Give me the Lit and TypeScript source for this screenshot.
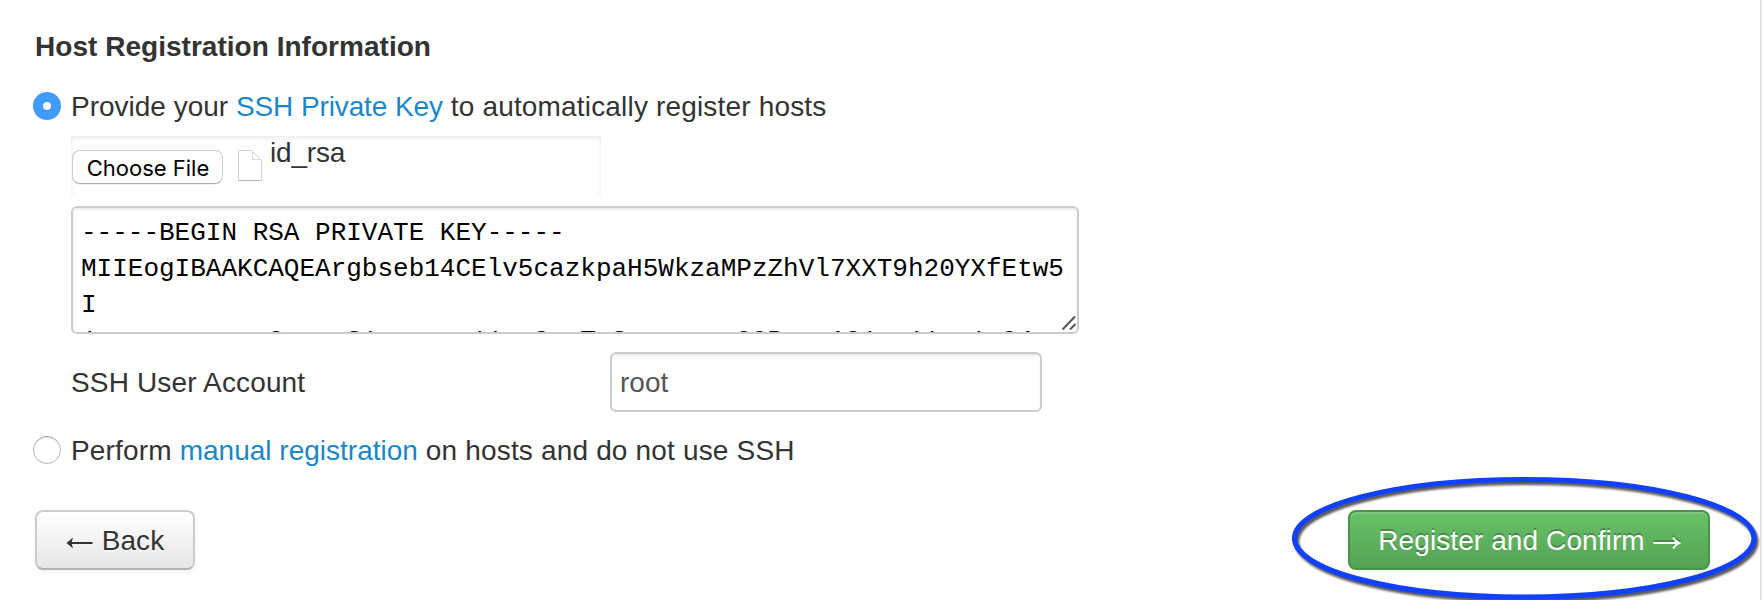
import { LitElement, html, css } from "lit";
import { customElement } from "lit/decorators.js";

@customElement("app-root")
export class AppRoot extends LitElement {
  static styles = css`
    :host {
      display: block;
      font-family: "Liberation Sans", Arial, sans-serif;
      font-size: 28px;
      line-height: 40px;
      color: #333;
    }
    * { box-sizing: border-box; }
    .page {
      position: relative;
      width: 1762px;
      height: 600px;
      overflow: hidden;
      border-right: 2px solid #e3e3e3;
      background: #fff;
      padding: 26px 50px 0 35px;
      white-space: nowrap;
    }
    h1 { margin: 0; padding-top: 1px; font-size: 28px; line-height: 40px; height: 40px; font-weight: bold; letter-spacing: 0.03px; }
    a { color: #1a87c9; text-decoration: none; }
    .option { display: flex; align-items: center; height: 40px; margin-left: -2px; }
    .option.first { margin-top: 20px; }
    .option.second { margin-top: 18px; }
    .text { padding-top: 1px; }
    .tight { letter-spacing: -0.11px; }
    .wide { letter-spacing: 0.17px; }
    .radio { width: 28px; height: 28px; margin-right: 10px; flex: none; }
    .nested { margin-left: 36px; }
    .file {
      width: 530px; height: 60px; margin-top: 10px; display: flex; align-items: flex-start; overflow: hidden;
      box-shadow: inset 0 2px 5px rgba(0,0,0,.085);
    }
    .choose {
      margin: 14px 0 0 1px; width: 151px; height: 34px; border-radius: 8px; padding: 2px 0 0 1px;
      border: 1px solid #cdcdcd; border-bottom-color: #b0b0b0; background: #fff;
      box-shadow: 0 1px 0 rgba(0,0,0,.06);
      font: 22px/30px "Inter", "Noto Sans", sans-serif; color: #000;
    }
    .doc { margin: 14px 0 0 14px; width: 26px; height: 32px; }
    .name { margin: -3px 0 0 7px; letter-spacing: -0.2px; }
    .key {
      width: 1008px; height: 128px; margin-top: 10px; padding: 7px 8px 0;
      border: 2px solid #ccc; border-radius: 6px; overflow: hidden;
      box-shadow: inset 0 2px 2px rgba(0,0,0,.075); position: relative;
      font: 26px/36px "Liberation Mono", monospace; color: #000; white-space: pre;
    }
    .line { height: 36px; }
    .grip { position: absolute; right: 0; bottom: 1px; width: 16px; height: 16px; }
    .account { display: flex; align-items: center; margin-top: 18px; height: 60px; }
    .label { width: 539px; padding-top: 1px; letter-spacing: 0.15px; }
    .user {
      width: 432px; height: 60px; border: 2px solid #ccc; border-radius: 6px; padding: 1px 8px 0 8px;
      font: 28px "Liberation Sans", sans-serif; color: #555; outline: 0;
      box-shadow: inset 0 2px 2px rgba(0,0,0,.075);
    }
    .actions { display: flex; justify-content: space-between; margin-top: 40px; }
    .btn {
      height: 60px; border-radius: 8px; display: flex; align-items: center; justify-content: center;
      gap: 9px; font: 28px/40px "Liberation Sans", sans-serif; padding: 1px 0 0; letter-spacing: 0.1px;
    }
    .arrow { width: 27px; height: 14px; flex: none; margin-top: 4px; fill: none; stroke: currentColor; stroke-width: 2; overflow: visible; }
    .back {
      width: 160px; color: #333; border: 2px solid #ccc; border-bottom-color: #b3b3b3;
      background: linear-gradient(#fff, #e6e6e6); text-shadow: 0 2px 2px rgba(255,255,255,.75);
      box-shadow: inset 0 2px 0 rgba(255,255,255,.2), 0 2px 4px rgba(0,0,0,.05);
    }
    .confirm {
      width: 362px; gap: 8px; color: #fff; border: 2px solid #4a934a;
      background: linear-gradient(#67c267, #55a255); text-shadow: 0 -2px 0 rgba(0,0,0,.25);
      box-shadow: inset 0 2px 0 rgba(255,255,255,.15), 0 2px 4px rgba(0,0,0,.05);
    }
    .confirm .arrow { filter: drop-shadow(0 -2px 0 rgba(0,0,0,.2)); }
    .ring {
      position: absolute; left: 1280px; top: 465px; width: 484px; height: 150px; pointer-events: none;
      filter: drop-shadow(2px 3px 1px rgba(0,0,0,.65));
    }
  `;

  render() {
    return html`
      <div class="page">
        <h1>Host Registration Information</h1>
        <div class="option first">
          <svg class="radio" viewBox="0 0 28 28"><circle cx="14" cy="14" r="14" fill="#409bfc"/><circle cx="14" cy="14.8" r="4" fill="#2f86e6"/><circle cx="14" cy="14" r="4" fill="#fff"/></svg>
          <span class="text">Provide your <a class="tight">SSH Private Key</a><span class="wide"> to automatically register hosts</span></span>
        </div>
        <div class="nested">
          <div class="file">
            <button class="choose">Choose File</button>
            <svg class="doc" viewBox="0 0 26 32">
              <path d="M1.5 .5H14.5L24.5 10.5V30.5H1.5Z" fill="#fff" stroke="#d2d2d2"/>
              <path d="M1.5 30.5H24.5" stroke="#b4b4b4"/>
              <path d="M15.5 1.5V9.5H24" fill="none" stroke="#d8d8d8"/>
            </svg>
            <span class="name">id_rsa</span>
          </div>
          <div class="key"><div class="line">-----BEGIN RSA PRIVATE KEY-----</div><div class="line">MIIEogIBAAKCAQEArgbseb14CElv5cazkpaH5WkzaMPzZhVl7XXT9h20YXfEtw5</div><div class="line">I</div><div class="line">1wsxnavcuzoe8mswrS1ernzou11vs8xzTuSnzxeuav99PuvnA91vu11em1v84se</div><svg class="grip" viewBox="0 0 16 16"><path d="M1.5 14.5L14 1.5M9 14.5L14.5 9" fill="none" stroke="#555" stroke-width="2"/></svg></div>
          <div class="account"><span class="label">SSH User Account</span><input class="user" value="root"></div>
        </div>
        <div class="option second">
          <svg class="radio" viewBox="0 0 28 28">
            <defs><linearGradient id="rim" x2="0" y2="1"><stop offset="0" stop-color="#8c8c8c"/><stop offset=".35" stop-color="#b8b8b8"/><stop offset="1" stop-color="#b0b0b0"/></linearGradient></defs>
            <circle cx="14" cy="14" r="13.5" fill="#fff" stroke="url(#rim)"/>
            <path d="M3.5 7A12.6 12.6 0 0 1 24.5 7" fill="none" stroke="#e6e6e6"/>
          </svg>
          <span class="text"><span class="wide">Perform </span><a>manual registration</a><span class="wide"> on hosts and do not use SSH</span></span>
        </div>
        <div class="actions">
          <button class="btn back"><svg class="arrow" viewBox="0 0 27 14"><path d="M2 7H26.5"/><path d="M.5 7L7 1.5L5.5 7L7 12.5Z" fill="currentColor" stroke="none"/></svg><span>Back</span></button>
          <button class="btn confirm"><span>Register and Confirm</span><svg class="arrow" viewBox="0 0 27 14"><path d="M.5 7H26M20 1.5Q22.5 5.5 26 7Q22.5 8.5 20 12.5"/></svg></button>
        </div>
        <svg class="ring" viewBox="0 0 484 150"><ellipse cx="244.3" cy="73.3" rx="229.8" ry="58.8" fill="none" stroke="#1140ff" stroke-width="5.2"/></svg>
      </div>`;
  }
}
